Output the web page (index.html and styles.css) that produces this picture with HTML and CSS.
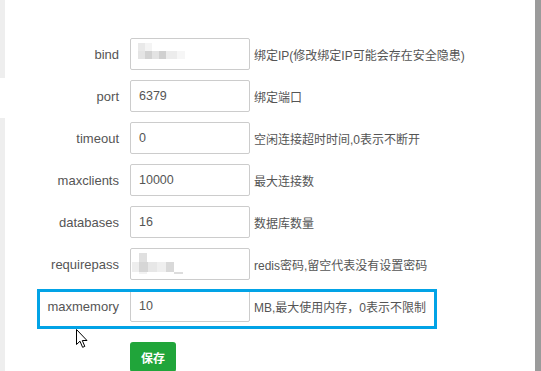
FILE: index.html
```html
<!DOCTYPE html>
<html>
<head>
<meta charset="utf-8">
<link rel="stylesheet" href="styles.css">
</head>
<body>
<div class="page">
  <div class="edge"><div class="edge-a"></div><div class="edge-b"></div></div>
  <main class="form">
    <div class="row">
      <span class="lbl">bind</span>
      <div class="inp">
        <svg class="mosaic" width="60" height="24" viewBox="0 0 60 24">
          <rect x="7" y="3" width="7" height="8" fill="#e9e9e9"/>
          <rect x="14" y="3" width="7" height="8" fill="#f4f4f4"/>
          <rect x="7" y="11" width="7" height="8" fill="#e4e4e4"/>
          <rect x="14" y="11" width="7" height="8" fill="#d2d2d2"/>
          <rect x="21" y="11" width="7" height="8" fill="#e3e3e3"/>
          <rect x="28" y="11" width="7" height="8" fill="#d0d0d0"/>
          <rect x="35" y="11" width="11" height="8" fill="#ececec"/>
          <rect x="46" y="11" width="8" height="8" fill="#f6f6f6"/>
        </svg>
      </div>
      <span class="hint">绑定IP(修改绑定IP可能会存在安全隐患)</span>
    </div>
    <div class="row">
      <span class="lbl">port</span>
      <div class="inp">6379</div>
      <span class="hint">绑定端口</span>
    </div>
    <div class="row">
      <span class="lbl">timeout</span>
      <div class="inp">0</div>
      <span class="hint">空闲连接超时时间,0表示不断开</span>
    </div>
    <div class="row">
      <span class="lbl">maxclients</span>
      <div class="inp">10000</div>
      <span class="hint">最大连接数</span>
    </div>
    <div class="row">
      <span class="lbl">databases</span>
      <div class="inp">16</div>
      <span class="hint">数据库数量</span>
    </div>
    <div class="row">
      <span class="lbl">requirepass</span>
      <div class="inp">
        <svg class="mosaic" width="60" height="26" viewBox="0 0 60 26">
          <rect x="8" y="3" width="8" height="9" fill="#e0e0e0"/>
          <rect x="1" y="12" width="8" height="10" fill="#eeeeee"/>
          <rect x="8" y="12" width="9" height="10" fill="#d6d6d6"/>
          <rect x="17" y="12" width="9" height="10" fill="#e7e7e7"/>
          <rect x="26" y="12" width="9" height="10" fill="#efefef"/>
          <rect x="35" y="12" width="8" height="10" fill="#d9d9d9"/>
          <rect x="8" y="22" width="8" height="2" fill="#f2f2f2"/>
          <rect x="43" y="22" width="9" height="2" fill="#dddddd"/>
        </svg>
      </div>
      <span class="hint">redis密码,留空代表没有设置密码</span>
    </div>
    <div class="row">
      <span class="lbl">maxmemory</span>
      <div class="inp">10</div>
      <span class="hint">MB,最大使用内存，0表示不限制</span>
    </div>
    <div class="actions">
      <button class="btn">保存</button>
    </div>
    <div class="annot"></div>
    <svg class="cursor" width="13" height="20" viewBox="0 0 13 20">
      <path d="M0.5 0.5 L0.5 15.5 L4 12.2 L6.6 18.3 L8.8 17.4 L6.3 11.5 L11 11.5 Z" fill="#fff" stroke="#000" stroke-width="1" stroke-linejoin="miter"/>
    </svg>
  </main>
  <div class="scroll"></div>
</div>
</body>
</html>
```

FILE: styles.css
```css
html, body {
  margin: 0;
  padding: 0;
  background: #fff;
}
body {
  width: 541px;
  height: 371px;
  overflow: hidden;
  font-family: "Liberation Sans", "Noto Sans CJK SC", sans-serif;
  font-size: 12px;
  color: #555;
}
.page {
  display: flex;
  height: 371px;
}
.edge {
  width: 5px;
  display: flex;
  flex-direction: column;
  gap: 40px;
  flex: none;
}
.edge-a {
  height: 78px;
  background: #eeeeee;
}
.edge-b {
  flex: 1;
  background: #eeeeee;
}
.form {
  position: relative;
  flex: 1;
  padding-top: 38px;
  display: flex;
  flex-direction: column;
  gap: 10px;
}
.row {
  display: flex;
  align-items: center;
  height: 32px;
}
.lbl {
  width: 114px;
  text-align: right;
  margin-right: 11px;
  font-size: 13px;
  color: #555;
  flex: none;
}
.inp {
  box-sizing: border-box;
  width: 120px;
  height: 32px;
  border: 1px solid #cccccc;
  border-radius: 2px;
  padding-left: 8px;
  display: flex;
  align-items: center;
  font-size: 12.5px;
  color: #555;
  flex: none;
  position: relative;
}
.mosaic {
  position: absolute;
  left: 0;
  top: 1px;
}
.hint {
  margin-left: 4px;
  color: #555;
  white-space: nowrap;
}
.actions {
  padding-left: 125px;
  padding-top: 10px;
}
.btn {
  width: 46px;
  height: 30px;
  border: none;
  border-radius: 3px;
  background: #20a53a;
  color: #fff;
  font-family: "Noto Sans CJK SC", sans-serif;
  font-size: 12px;
  font-weight: bold;
  padding: 0;
}
.annot {
  position: absolute;
  left: 32px;
  top: 289px;
  width: 394px;
  height: 34px;
  border: 3px solid #02a3e6;
}
.cursor {
  position: absolute;
  left: 71px;
  top: 329px;
}
.scroll {
  width: 6px;
  flex: none;
  background: #9b9b9b;
}
```
